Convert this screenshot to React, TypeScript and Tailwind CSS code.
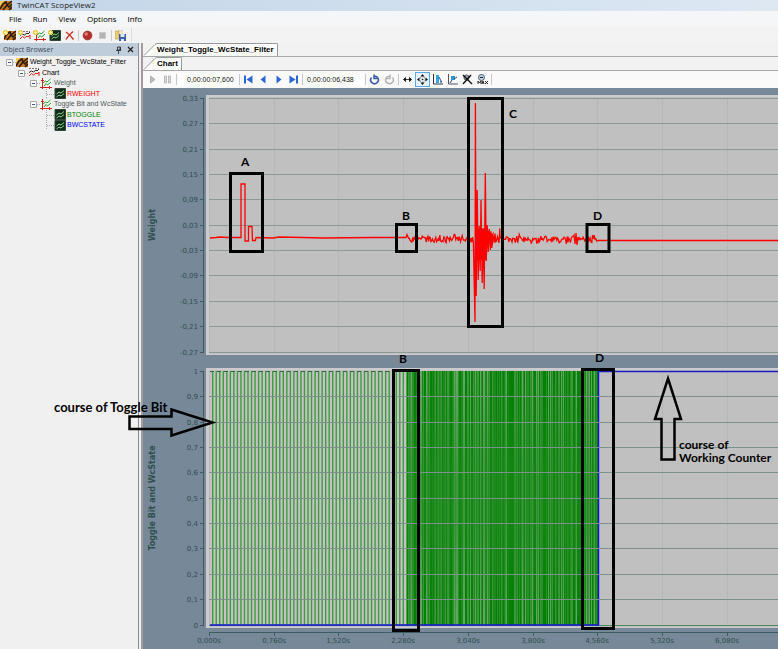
import React from 'react';

type IconKind = 'project' | 'chart' | 'axis' | 'channel';

interface TreeItem {
  label: string;
  level: number;
  icon: IconKind;
  color: string;
  leaf?: boolean;
}

const MENU = ['File', 'Run', 'View', 'Options', 'Info'];

const TREE: TreeItem[] = [
  { label: 'Weight_Toggle_WcState_Filter', level: 0, icon: 'project', color: 'text-black' },
  { label: 'Chart', level: 1, icon: 'chart', color: 'text-black' },
  { label: 'Weight', level: 2, icon: 'axis', color: 'text-[#4f5a5a]' },
  { label: 'RWEIGHT', level: 3, icon: 'channel', color: 'text-[#ff0000]', leaf: true },
  { label: 'Toggle Bit and WcState', level: 2, icon: 'axis', color: 'text-[#4f5a5a]' },
  { label: 'BTOGGLE', level: 3, icon: 'channel', color: 'text-[#008000]', leaf: true },
  { label: 'BWCSTATE', level: 3, icon: 'channel', color: 'text-[#0000ff]', leaf: true },
];

const INDENT = ['pl-[6px]', 'pl-[18px]', 'pl-[30px]', 'pl-[42px]'];

const WEIGHT_TICKS = ['0,33', '0,27', '0,21', '0,15', '0,09', '0,03', '-0,03', '-0,09', '-0,15', '-0,21', '-0,27'];
const BIT_TICKS = ['1', '0,9', '0,8', '0,7', '0,6', '0,5', '0,4', '0,3', '0,2', '0,1', '0'];
const TIME_TICKS = [0, 0.76, 1.52, 2.28, 3.04, 3.8, 4.56, 5.32, 6.08];

// Chart geometry, measured from the left edge of the chart panel
const PLOT_X = 66;
const TIME_STEP = 64.7;
const FAR = 4000;

const createRandom = (seed: number) => () => {
  seed = (seed * 16807) % 2147483647;
  return seed / 2147483647;
};

const weightTrace = () => {
  const rnd = createRandom(77);
  const pts: number[][] = [
    [67, 150], [73, 149.5], [77, 149], [84, 149.5], [98, 149.5], [98, 96], [102, 96], [102, 153], [105.5, 153],
    [105.5, 138.5], [109, 138.5], [109.5, 152.5], [112.5, 152.5], [113, 149.5], [130, 150], [136, 149], [160, 149.5],
    [180, 150], [230, 149.5], [263, 149.5],
  ];
  const noise = (from: number, to: number, amp: number) => {
    for (let x = from; x < to; x += 0.8) pts.push([x, 151 + (rnd() + rnd() - 1) * amp]);
  };
  noise(264, 331, 5);
  pts.push(
    [332, 234], [332.4, 15], [333.2, 208], [334.2, 102], [335.2, 192], [336.2, 138], [337.2, 183], [338, 112],
    [339.2, 195], [340.2, 140], [341.2, 201], [342.3, 85], [343.3, 173], [344.2, 137], [345.2, 164], [346.3, 141],
    [347.3, 162], [348.2, 145], [349.3, 157], [350, 146],
  );
  // the pack of fast swings inside the impact
  for (let x = 333; x < 344; x += 0.5) pts.push([x, x % 1 ? 141 : 172]);
  noise(344, 357, 12);
  noise(357, 431, 5);
  pts.push([431, 147], [432, 156], [433, 145], [434, 157], [435, 149]);
  noise(436, 454, 5);
  pts.push([455, 152.5], [FAR, 152.5]);
  return pts.map(p => p.join(',')).join(' ');
};

const TOGGLE_SLOW = Array.from({ length: 56 }, (_, i) => 69 + i * 3.53);
const TOGGLE_FAST = (() => {
  const rnd = createRandom(4711);
  const shades = ['#008000', '#008000', '#1a891a', '#2c8f2c', '#419741', '#66a866'];
  return Array.from({ length: 192 }, (_, i) => ({ x: 264 + i, fill: shades[Math.floor(rnd() * 6)] }));
})();

const ScopeIcon = ({ kind }: { kind: IconKind }) => (
  <svg width="12" height="11" viewBox="0 0 12 11" className="shrink-0" aria-hidden="true">
    {kind === 'project' && (
      <>
        <path d="M0 1h12v9H0z" fill="#c97a1c" />
        <path d="M0 1h4l-4 5z" fill="#f5cf57" />
        <path d="M0 9 3 4l3-2 1 3 5-4M3 10l4-5 2 2 3-3M9 10l3-3" fill="none" stroke="#2b1c12" strokeWidth="1.6" />
      </>
    )}
    {kind === 'chart' && (
      <>
        <path d="M0 1h12v9H0z" fill="#f4eeee" />
        <path d="M1 1.500h10" stroke="#777" strokeDasharray="2 1" />
        <path d="M1 5.500 3.500 4l2 1L8 3l1 1 2-2" fill="none" stroke="#222" />
        <path d="M1 9 3.500 6.500l2 1.500L8 6l1 1 2-2v4" fill="none" stroke="#db1b1b" />
      </>
    )}
    {kind === 'axis' && (
      <>
        <path d="M0 1h12v9H0z" fill="#f8f8f4" />
        <path d="M2.500 0v11M0 9.500h12M1 2.500h3M9.500 8v3" stroke="#d22020" fill="none" />
        <path d="M3 5 5.500 3 7 4l3.500-3M4 8l2-2.500L7.500 7 11 4" fill="none" stroke="#1d9a2b" />
      </>
    )}
    {kind === 'channel' && (
      <>
        <path d="M1 .5h10.500v10H1z" fill="#102c16" stroke="#31453a" />
        <path d="M2.500 6 5 4l2 1 3-2.500M2.500 9 5 7l2 1 3-2.500" fill="none" stroke="#8ed092" />
      </>
    )}
  </svg>
);

const NewBadge = () => (
  <svg width="5" height="5" viewBox="0 0 5 5" className="absolute left-px top-[2px]" aria-hidden="true">
    <path d="M1 0h3v1h1v3H4v1H1V4H0V1h1z" fill="#f0cb48" />
    <path d="M2 1h1v3H2zM1 2h3v1H1z" fill="#fff3b0" />
  </svg>
);

const ToolButton = ({ label, active, children }: { label: string; active?: boolean; children: React.ReactNode }) => (
  <button
    type="button"
    aria-label={label}
    className={`relative flex h-[15px] w-[15px] shrink-0 items-center justify-center ${
      active ? 'border border-[#5aa9ee] bg-[#e6f2fd]' : ''
    }`}
  >
    {children}
  </button>
);

const Glyph = ({ children }: { children: React.ReactNode }) => (
  <svg width="11" height="11" viewBox="0 0 11 11" className="shrink-0" aria-hidden="true">
    {children}
  </svg>
);

const Separator = () => <span className="mx-px h-[11px] w-px shrink-0 bg-[#c9c9cc]" />;

const MainToolbar = () => (
  <div className="flex h-4 items-center bg-[#f3f3f4] pl-[2px]">
    <ToolButton label="New project"><ScopeIcon kind="project" /><NewBadge /></ToolButton>
    <ToolButton label="New chart"><ScopeIcon kind="chart" /><NewBadge /></ToolButton>
    <ToolButton label="New axis"><ScopeIcon kind="axis" /><NewBadge /></ToolButton>
    <ToolButton label="New channel"><ScopeIcon kind="channel" /><NewBadge /></ToolButton>
    <ToolButton label="Delete">
      <Glyph><path d="M2 2c3 2 5 4 7.500 7.500M9 1.500C6 4 4 6 2 9.500" fill="none" stroke="#d8301c" strokeWidth="1.400" /></Glyph>
    </ToolButton>
    <Separator />
    <ToolButton label="Record">
      <Glyph>
        <circle cx="5.500" cy="5.500" r="4.500" fill="#b52d2a" stroke="#8c3a38" strokeWidth=".6" />
        <circle cx="4.200" cy="4" r="1.800" fill="#dd8078" />
      </Glyph>
    </ToolButton>
    <ToolButton label="Stop">
      <Glyph><path d="M2.500 2.500h6v6h-6z" fill="#b4b4b4" stroke="#c9c9c9" /></Glyph>
    </ToolButton>
    <Separator />
    <ToolButton label="Save data">
      <Glyph>
        <path d="M0 1h4v8H0z" fill="#efcf6c" stroke="#b59a48" strokeWidth=".6" />
        <path d="M4 0h3v6H4z" fill="#f7efcf" stroke="#b8ae86" strokeWidth=".6" />
        <path d="M4 4h7v7H4z" fill="#3a5fae" />
        <path d="M5.500 4h4v3h-4zM6 9h3v2H6z" fill="#dfe8f6" />
      </Glyph>
    </ToolButton>
    <span className="ml-[3px] h-[14px] w-px bg-[#dcdcde]" />
  </div>
);

const ChartToolbar = () => (
  <div className="flex h-[17px] items-center bg-[#fafafb] pl-[2px]">
    <ToolButton label="Play"><Glyph><path d="M3.500 2v7L8 5.500z" fill="#bcbcbc" stroke="#9b9b9b" strokeWidth=".7" /></Glyph></ToolButton>
    <ToolButton label="Pause"><Glyph><path d="M2.500 2H4.500v7H2.500zM6.500 2h2v7h-2z" fill="#ddd" stroke="#a5a5a5" strokeWidth=".7" /></Glyph></ToolButton>
    <Separator />
    <input aria-label="Record time" readOnly value="0,00:00:07,600" className="h-[13px] w-[60px] shrink-0 bg-white pl-[9px] text-[7px] text-[#111]" />
    <Separator />
    <ToolButton label="First"><Glyph><path d="M1 1.500h2v8H1zM9.500 1.500v8L3.500 5.500z" fill="#2c66d8" /></Glyph></ToolButton>
    <ToolButton label="Back"><Glyph><path d="M7.500 1.500v8L2.500 5.500z" fill="#2c66d8" /></Glyph></ToolButton>
    <ToolButton label="Forward"><Glyph><path d="M3.500 1.500v8l5-4z" fill="#2c66d8" /></Glyph></ToolButton>
    <ToolButton label="Last"><Glyph><path d="M8 1.500h2v8H8zM1.500 1.500v8l6-4z" fill="#2c66d8" /></Glyph></ToolButton>
    <Separator />
    <input aria-label="Display width" readOnly value="0,00:00:06,438" className="h-[13px] w-[60px] shrink-0 bg-white pl-[3px] text-[7px] text-[#111]" />
    <Separator />
    <ToolButton label="Undo">
      <Glyph><path d="M2.500 3.500a3.800 3.800 0 1 0 6 0C8 2.500 7 2.200 5.500 2.500M5 .5v4h3.500" fill="none" stroke="#3f5fae" strokeWidth="1.600" /></Glyph>
    </ToolButton>
    <ToolButton label="Redo">
      <Glyph><path d="M8.500 3.500a3.800 3.800 0 1 1-6 0C3 2.500 4 2.200 5.500 2.500M6 .5v4H2.500" fill="none" stroke="#b3b3b3" strokeWidth="1.400" /></Glyph>
    </ToolButton>
    <Separator />
    <ToolButton label="Scroll">
      <Glyph><path d="M3 5.500h5M3.500 3.500v4L1.500 5.500zM7.500 3.500v4l2-2z" fill="#111" stroke="#111" strokeWidth=".8" /></Glyph>
    </ToolButton>
    <ToolButton label="Pan" active>
      <Glyph>
        <path d="M5.500 0 7.500 2.500h-4zM5.500 11l-2-2.500h4zM0 5.500l2.500-2v4zM11 5.500l-2.500-2v4z" fill="#111" />
        <circle cx="5.500" cy="5.500" r="2.800" fill="none" stroke="#555" strokeWidth=".8" strokeDasharray="2 1" />
        <circle cx="5.500" cy="5.500" r=".8" fill="#111" />
      </Glyph>
    </ToolButton>
    <ToolButton label="Zoom X">
      <Glyph><path d="M1.500 0v10H11" fill="none" stroke="#334" /><path d="M4 1h3v8H4z" fill="#36a3e4" /><path d="m7 3 2.500 5M8 8h2" stroke="#234d78" /></Glyph>
    </ToolButton>
    <ToolButton label="Zoom XY">
      <Glyph><path d="M1.500 0v10H11" fill="none" stroke="#556" /><path d="M4 2h4v4H4z" fill="#2d94dd" /><path d="m7 5 3-2M3 9l2-3" stroke="#34495e" /></Glyph>
    </ToolButton>
    <ToolButton label="Zoom out">
      <Glyph><circle cx="4.500" cy="3.500" r="2.600" fill="#9aa9b8" stroke="#444" strokeWidth=".8" /><path d="m1 1 9 9M9 1 1 10" stroke="#111" strokeWidth="1.400" /></Glyph>
    </ToolButton>
    <ToolButton label="Zoom out max">
      <Glyph>
        <circle cx="4.500" cy="3.500" r="3" fill="#bcd7ea" stroke="#4d5964" />
        <path d="M3 3.500h3" stroke="#223" />
        <path d="M1 10V7l1.500 2L4 7v3M5 10l1-3 1 3M8 7l3 3M11 7l-3 3" fill="none" stroke="#111" strokeWidth=".9" />
      </Glyph>
    </ToolButton>
    <Separator />
  </div>
);

const TreeRow = ({ item }: { item: TreeItem }) => (
  <li className={`flex h-[10px] items-center ${INDENT[item.level]}`}>
    {item.leaf ? (
      <svg width="12" height="10" viewBox="0 0 12 10" className="shrink-0" aria-hidden="true">
        <path d="M4.500 0v10M5 5.500h7" stroke="#a9a9a9" strokeDasharray="1 1" fill="none" />
      </svg>
    ) : (
      <svg width="10" height="10" viewBox="0 0 10 10" className="shrink-0" aria-hidden="true">
        <path d="M7 5.500h3" stroke="#a9a9a9" strokeDasharray="1 1" />
        <path d="M.5 2.500h6v6h-6z" fill="#fff" stroke="#a8a8a8" />
        <path d="M2 5.500h3" stroke="#3c57a8" />
      </svg>
    )}
    <ScopeIcon kind={item.icon} />
    <span className={`whitespace-nowrap text-[7px] leading-[10px] ${item.leaf ? 'pl-px' : 'pl-[2px]'} ${item.color}`}>
      {item.label}
    </span>
  </li>
);

const ObjectBrowser = () => (
  <aside className="w-[139px] shrink-0 border-r border-[#8d8b98] bg-[#f0f0f0]">
    <header className="flex h-[13px] items-center bg-[#bfcddb] pl-[3px] pr-[4px] leading-[13px] text-[#3d4754]">
      <h2 className="flex-1 whitespace-nowrap font-['Open_Sans',sans-serif] text-[7px]">Object Browser</h2>
      <button type="button" aria-label="Pin" className="mr-[5px]">
        <svg width="7" height="8" viewBox="0 0 7 8"><path d="M2.500 1h3v3h-3zM1 4.500h5M3.500 5v3M5 1v3" fill="none" stroke="#222" strokeWidth=".8" /></svg>
      </button>
      <button type="button" aria-label="Close">
        <svg width="7" height="7" viewBox="0 0 7 7"><path d="m1 1 5 5M6 1 1 6" stroke="#222" strokeWidth="1.300" /></svg>
      </button>
    </header>
    <ul className="mt-px flex h-[73px] flex-col justify-between">
      {TREE.map(item => <TreeRow key={item.label} item={item} />)}
    </ul>
  </aside>
);

const Tab = ({ label }: { label: string }) => (
  <div className="flex h-[14px] items-end border-b border-[#a8a8a8] bg-[#f2f2f2]">
    <svg width="14" height="13" viewBox="0 0 14 13" className="shrink-0" aria-hidden="true">
      <path d="M0 13 12 1.500 14 .5V13z" fill="#fff" />
      <path d="M1 12.500 12 1.500 14 .5" fill="none" stroke="#999" />
    </svg>
    <button type="button" className="h-[13px] whitespace-nowrap rounded-tr-[2px] border-r border-t border-[#999] bg-white pr-[3px] text-[8px] font-bold leading-[12px]">
      {label}
    </button>
  </div>
);

interface ScopeChartProps {
  title: string;
  ticks: string[];
  top: number;
  trace: React.ReactNode;
  gridColor: string;
  gridOnTop?: boolean;
}

const ScopeChart = ({ title, ticks, top, trace, gridColor, gridOnTop }: ScopeChartProps) => {
  const yOf = (i: number) => top + Math.round(i * 25.35);
  const bottom = yOf(10);
  const middle = (top + bottom) / 2;
  const grid = ticks.map((t, i) => <path key={t} d={`M66 ${yOf(i) + 0.5}H${FAR}`} stroke={gridColor} />);

  return (
    <svg width="100%" height="272" className="block" role="img" aria-label={title}>
      <rect x="63" y={top - 3} width={FAR} height={bottom - top + 6} fill="#cbcbcd" />
      <rect x="66" y={top - 1} width={FAR} height={bottom - top + 3} fill="#c0c0c0" />
      {TIME_TICKS.map((t, i) => (
        <path key={t} d={`M${Math.round(PLOT_X + i * TIME_STEP) + 0.5} ${top}V${bottom}`} stroke="#b1b5b3" strokeDasharray="3 1" />
      ))}
      {!gridOnTop && grid}
      {trace}
      {gridOnTop && grid.slice(1, 10)}
      <g stroke="#3f5b62" fill="none">
        <path d={`M60.500 ${top}V${bottom + 1}`} />
        {ticks.map((t, i) => <path key={t} d={`M57 ${yOf(i) + 0.5}h3`} />)}
      </g>
      <g fill="#2f4f4f" fontFamily="'DejaVu Sans', Verdana, sans-serif">
        {ticks.map((t, i) => (
          <text key={t} x="55" y={yOf(i) + 3} fontSize="7" textAnchor="end">{t}</text>
        ))}
        <text transform={`translate(12 ${middle}) rotate(-90)`} fontSize="8" fontWeight="bold" textAnchor="middle">{title}</text>
      </g>
    </svg>
  );
};

const BitTraces = () => (
  <>
    <defs>
      <linearGradient id="dense" x1="0" y1="0" x2="0" y2="1">
        <stop offset="0" stopColor="#1f8c1f" stopOpacity="0" />
        <stop offset=".4" stopColor="#1f8c1f" stopOpacity=".55" />
        <stop offset=".6" stopColor="#1f8c1f" stopOpacity=".55" />
        <stop offset="1" stopColor="#1f8c1f" stopOpacity="0" />
      </linearGradient>
    </defs>
    <path d={`M66 265.500H${FAR}`} stroke="#4c8a5c" />
    <rect x="67" y="11" width="197" height="254" fill="#c7c1c7" />
    {TOGGLE_SLOW.map(x => <rect key={x} x={x} y="11" width="1.4" height="254" fill="#3a9f3a" />)}
    <path d="M67 11.500H264" stroke="#2b6b3b" strokeDasharray="4 3" />
    {TOGGLE_FAST.map(s => <rect key={s.x} x={s.x} y="11" width="1" height="254" fill={s.fill} />)}
    <rect x="264" y="11" width="192" height="254" fill="url(#dense)" />
    <path d="M67 265H455.500V11.500" fill="none" stroke="#1414d8" strokeWidth="1.500" />
    <path d={`M455 11.500H${FAR}`} stroke="#1c1cc4" strokeWidth="1.500" />
  </>
);

const TimeAxis = () => (
  <svg width="100%" height="17" className="block" role="img" aria-label="Time">
    <path d={`M66 .5H${FAR}`} stroke="#3f5b62" />
    <g fill="#2f4f4f" fontFamily="'DejaVu Sans', Verdana, sans-serif" fontSize="7" textAnchor="middle">
      {TIME_TICKS.map((t, i) => (
        <React.Fragment key={t}>
          <path d={`M${Math.round(PLOT_X + i * TIME_STEP) + 0.5} 0v4`} stroke="#3f5b62" />
          <text x={Math.round(PLOT_X + i * TIME_STEP)} y="11">{t.toFixed(3).replace('.', ',')}s</text>
        </React.Fragment>
      ))}
    </g>
  </svg>
);

const NOTE = 'absolute whitespace-nowrap font-bold leading-[12px]';

const Annotations = () => (
  <div className="pointer-events-none absolute inset-0 overflow-hidden font-['Lato',sans-serif] text-[12px] text-black">
    <svg width="100%" height="100%" className="absolute inset-0" aria-hidden="true">
      <g fill="none" stroke="#000" strokeWidth="3">
        <rect x="230.500" y="173.500" width="32" height="78" />
        <rect x="396.500" y="224.500" width="20" height="27" />
        <rect x="468.500" y="98.500" width="34" height="228" />
        <rect x="587" y="224.500" width="22" height="27" />
        <rect x="393.500" y="370.500" width="25" height="260" />
        <rect x="582.500" y="369.500" width="31" height="259" />
        <path d="M129.500 416.500h42v-7l41 13-41 13v-6.500h-42z" strokeWidth="2.500" />
        <path d="M668 378.500l13 40.500h-6.500v40.500h-13V419H655z" strokeWidth="2.500" />
      </g>
    </svg>
    <span className={`${NOTE} left-[241px] top-[156px]`}>A</span>
    <span className={`${NOTE} left-[402px] top-[210px]`}>B</span>
    <span className={`${NOTE} left-[509px] top-[108px]`}>C</span>
    <span className={`${NOTE} left-[593px] top-[210px]`}>D</span>
    <span className={`${NOTE} left-[399px] top-[353px]`}>B</span>
    <span className={`${NOTE} left-[595px] top-[352px]`}>D</span>
    <span className={`${NOTE} left-[54px] top-[401px] text-[13px]`}>course of Toggle Bit</span>
    <p className="absolute left-[679px] top-[438px] whitespace-nowrap font-bold leading-[13px]">
      course of<br />Working Counter
    </p>
  </div>
);

export default function App() {
  return (
    <div className="relative flex min-h-screen flex-col overflow-hidden bg-[#f0f0f0] font-['Liberation_Sans',Arial,sans-serif] text-black">
      <header className="flex h-[11px] items-start gap-[5px] bg-linear-to-r from-[#c3d5e8] to-[#dde8f3]">
        <ScopeIcon kind="project" />
        <h1 className="font-['Open_Sans',sans-serif] text-[8px] leading-[9px] text-[#222]">TwinCAT ScopeView2</h1>
      </header>
      <nav className="flex h-4 items-center gap-[11px] bg-[#f5f6f7] pl-[9px] font-['Open_Sans',sans-serif] text-[8px]">
        {MENU.map(m => <button type="button" key={m} className="leading-4">{m}</button>)}
      </nav>
      <MainToolbar />

      <div className="flex flex-1">
        <ObjectBrowser />
        <main className="ml-[2px] min-w-0 flex-1 border-l-2 border-[#a29c9e] bg-[#778899]">
          <Tab label="Weight_Toggle_WcState_Filter" />
          <Tab label="Chart" />
          <ChartToolbar />
          <ScopeChart
            title="Weight"
            ticks={WEIGHT_TICKS}
            top={10}
            gridColor="#8b9a99"
            trace={<polyline points={weightTrace()} fill="none" stroke="#ff0000" strokeWidth="1.3" />}
          />
          <ScopeChart
            title="Toggle Bit and WcState"
            ticks={BIT_TICKS}
            top={11}
            gridColor="#7b918b"
            gridOnTop
            trace={<BitTraces />}
          />
          <TimeAxis />
        </main>
      </div>
      <Annotations />
    </div>
  );
}
